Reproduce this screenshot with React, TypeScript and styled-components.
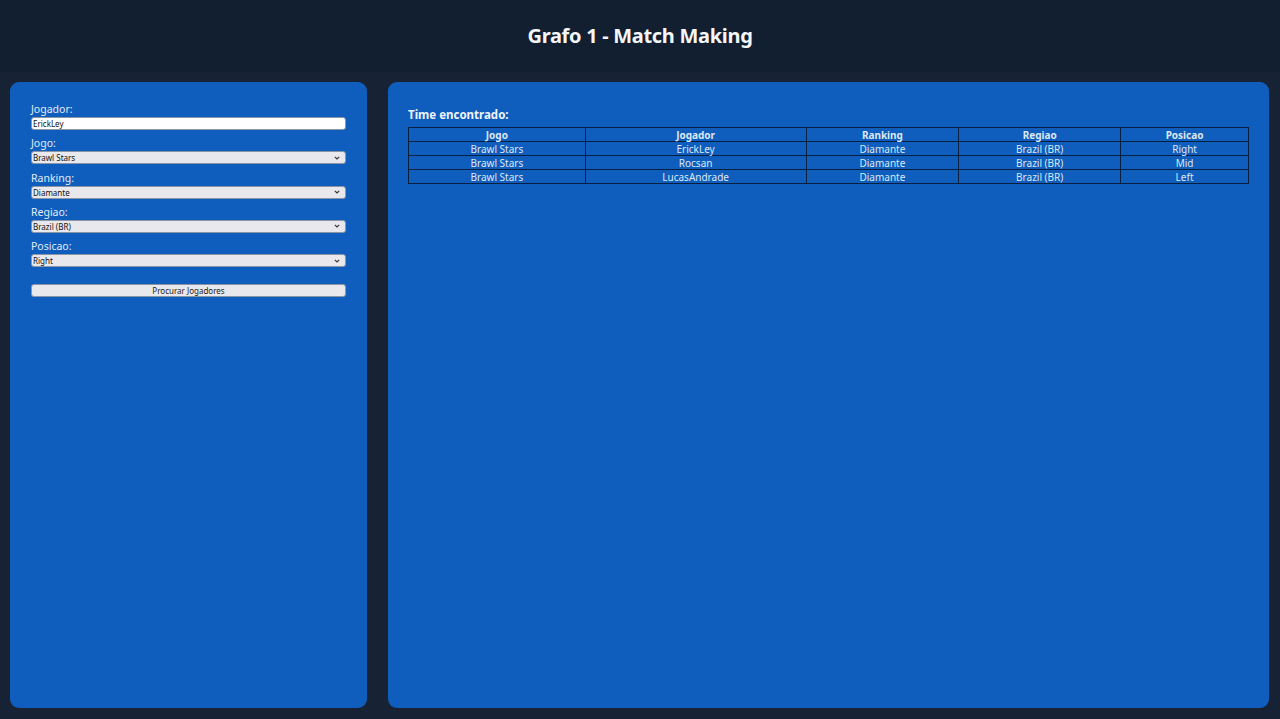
import React from "react";
import styled, { createGlobalStyle } from "styled-components";

const Global = createGlobalStyle`
  html, body { margin: 0; padding: 0; background: #172334; }
  body { font-family: "Noto Sans", "DejaVu Sans", sans-serif; }
  * { box-sizing: border-box; }
`;

const Page = styled.div`
  width: 1280px;
  height: 719px;
  display: flex;
  flex-direction: column;
  background: #172334;
  overflow: hidden;
`;

const Header = styled.header`
  height: 72px;
  background: #121f30;
  display: flex;
  align-items: center;
  justify-content: center;
`;

const Title = styled.h1`
  margin: 0 0 1px;
  color: #f4f6f8;
  font-size: 20px;
  font-weight: 700;
  letter-spacing: -0.3px;
`;

const Main = styled.main`
  flex: 1;
  display: flex;
  gap: 21px;
  padding: 10px 11px 11px 10px;
`;

const Panel = styled.section<{ $w?: number }>`
  background: #0f5ebd;
  border-radius: 9px;
  ${(p) => (p.$w ? `width: ${p.$w}px; flex: none;` : "flex: 1;")}
  padding: 21px 20px;
  display: flex;
  flex-direction: column;
`;

const Form = styled.div`
  display: flex;
  flex-direction: column;
  padding-left: 1px;
`;

const Field = styled.div`
  display: flex;
  flex-direction: column;
  margin-bottom: 7.25px;
`;

const Label = styled.label`
  color: #e3ebf5;
  font-size: 10.5px;
  line-height: 14px;
  position: relative;
  top: -1px;
`;

const Input = styled.input`
  width: 315px;
  height: 13px;
  font-size: 8px;
  font-family: "Noto Sans", sans-serif;
  padding: 0 1px;
  border: 1px solid #8a96a6;
  border-radius: 3px;
  background: #fff;
  color: #111;
  outline: none;
`;

const SelectBox = styled.div`
  width: 315px;
  height: 13px;
  border: 1px solid #8a96a6;
  border-radius: 3px;
  background: #e9e9ed;
  color: #111;
  font-size: 8px;
  display: flex;
  align-items: center;
  justify-content: space-between;
  padding: 0 5px 0 1px;
`;

const Button = styled.button`
  margin-top: 10px;
  width: 315px;
  height: 13px;
  border: 1px solid #8a96a6;
  border-radius: 3px;
  background: #e9e9ed;
  color: #222;
  font-size: 8px;
  font-family: "Noto Sans", sans-serif;
  padding: 0;
  line-height: 11px;
`;

const Subtitle = styled.h2`
  margin: 5px 0 5px;
  color: #f0f4fa;
  font-size: 11.5px;
  font-weight: 700;
  line-height: 14px;
`;

const Table = styled.table`
  width: 100%;
  border-collapse: collapse;
  color: #dce7f5;
  font-size: 10px;
`;

const Th = styled.th<{ $w: number }>`
  width: ${(p) => p.$w}px;
  border: 1px solid #0a1e3e;
  font-weight: 700;
  height: 14px;
  padding: 0;
  line-height: 12px;
`;

const Td = styled.td`
  border: 1px solid #0a1e3e;
  text-align: center;
  height: 14px;
  padding: 0;
  line-height: 12px;
`;

const Chevron = () => (
  <svg width="6" height="4" viewBox="0 0 6 4">
    <path d="M0.8 0.8 L3 3 L5.2 0.8" stroke="#333" strokeWidth="1.1" fill="none" />
  </svg>
);

const selects = [
  ["Jogo:", "Brawl Stars"],
  ["Ranking:", "Diamante"],
  ["Regiao:", "Brazil (BR)"],
  ["Posicao:", "Right"],
];

const cols: [string, number][] = [
  ["Jogo", 177],
  ["Jogador", 221],
  ["Ranking", 153],
  ["Regiao", 162],
  ["Posicao", 128],
];

const rows = [
  ["Brawl Stars", "ErickLey", "Diamante", "Brazil (BR)", "Right"],
  ["Brawl Stars", "Rocsan", "Diamante", "Brazil (BR)", "Mid"],
  ["Brawl Stars", "LucasAndrade", "Diamante", "Brazil (BR)", "Left"],
];

export default function App() {
  return (
    <Page>
      <Global />
      <Header>
        <Title>Grafo 1 - Match Making</Title>
      </Header>
      <Main>
        <Panel $w={357}>
          <Form>
            <Field>
              <Label>Jogador:</Label>
              <Input defaultValue="ErickLey" />
            </Field>
            {selects.map(([l, v]) => (
              <Field key={l}>
                <Label>{l}</Label>
                <SelectBox>
                  <span>{v}</span>
                  <Chevron />
                </SelectBox>
              </Field>
            ))}
            <Button>Procurar Jogadores</Button>
          </Form>
        </Panel>
        <Panel>
          <Subtitle>Time encontrado:</Subtitle>
          <Table>
            <thead>
              <tr>
                {cols.map(([c, w]) => (
                  <Th key={c} $w={w}>{c}</Th>
                ))}
              </tr>
            </thead>
            <tbody>
              {rows.map((r, i) => (
                <tr key={i}>
                  {r.map((c, j) => (
                    <Td key={j}>{c}</Td>
                  ))}
                </tr>
              ))}
            </tbody>
          </Table>
        </Panel>
      </Main>
    </Page>
  );
}
